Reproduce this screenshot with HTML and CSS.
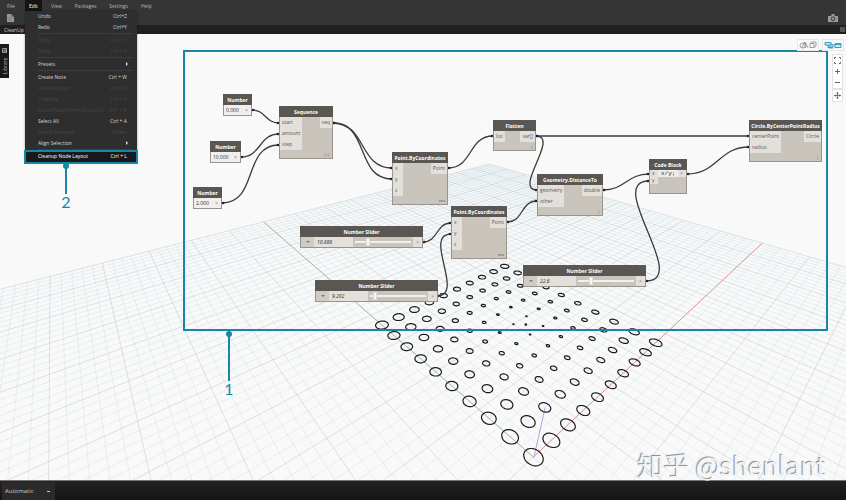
FILE: index.html
```html
<!DOCTYPE html>
<html lang="en">
<head>
    <meta charset="UTF-8">
    <meta name="viewport" content="width=device-width, initial-scale=1.0">
    <title>CleanUp</title>
    <link rel="stylesheet" href="styles.css">
</head>
<body>

    <!-- menu bar -->
    <nav class="menubar">
        <button>File</button>
        <div class="menu-holder">
            <button class="open">Edit</button>
            <div class="dropdown">
                <button><span>Undo</span><span>Ctrl+Z</span></button>
                <button><span>Redo</span><span>Ctrl+Y</span></button>
                <hr>
                <button disabled><span>Copy</span><span>Ctrl + C</span></button>
                <button disabled><span>Paste</span><span>Ctrl + V</span></button>
                <hr>
                <button class="sub"><span>Presets</span></button>
                <hr>
                <button><span>Create Note</span><span>Ctrl + W</span></button>
                <button disabled><span>Create Group</span><span>Ctrl + G</span></button>
                <button disabled><span>Ungroup</span><span>Ctrl + U</span></button>
                <button disabled><span>Create Node From Selection</span><span>Ctrl + D</span></button>
                <button><span>Select All</span><span>Ctrl + A</span></button>
                <button disabled><span>Delete Selected</span><span>Delete</span></button>
                <button class="sub"><span>Align Selection</span></button>
                <hr>
                <button class="current"><span>Cleanup Node Layout</span><span>Ctrl + L</span></button>
                <div class="callout callout-menu"><i></i><b>2</b></div>
            </div>
        </div>
        <button>View</button>
        <button>Packages</button>
        <button>Settings</button>
        <button>Help</button>
    </nav>

    <!-- toolbar -->
    <div class="toolbar">
        <button aria-label="New"><svg width="7" height="8" viewBox="0 0 7 8"><path d="M0 0h4l3 3v5H0z" fill="#999"/><path d="M4 0v3h3M1 4h4M1 6h4" fill="none" stroke="#666" stroke-width=".6"/></svg></button>
        <button aria-label="Export image"><svg width="10" height="8" viewBox="0 0 10 8"><path d="M0 2h3l1-2h2l1 2h3v6H0z" fill="#999"/><circle cx="5" cy="4.700" r="1.800" fill="#999" stroke="#333"/></svg></button>
    </div>
    <div class="tabs"><span>CleanUp</span><i></i></div>

    <!-- workspace -->
    <main class="workspace">
        <svg class="layer" id="scene"></svg>
        <svg class="layer" id="wires"></svg>

        <section class="node number n-start">
            <h2>Number</h2>
            <div class="row"><input type="text" value="0.000" aria-label="Number"><span>&gt;</span></div>
        </section>
        <section class="node number n-amount">
            <h2>Number</h2>
            <div class="row"><input type="text" value="10.000" aria-label="Number"><span>&gt;</span></div>
        </section>
        <section class="node number n-step">
            <h2>Number</h2>
            <div class="row"><input type="text" value="2.000" aria-label="Number"><span>&gt;</span></div>
        </section>

        <section class="node tall n-sequence">
            <h2>Sequence</h2>
            <div class="ports">
                <ul><li>start</li><li>amount</li><li>step</li></ul>
                <ul><li>seq</li></ul>
            </div>
            <small>|||</small>
        </section>
        <section class="node tall n-point1">
            <h2>Point.ByCoordinates</h2>
            <div class="ports">
                <ul><li>x</li><li>y</li><li>z</li></ul>
                <ul><li>Point</li></ul>
            </div>
            <small>xxx</small>
        </section>
        <section class="node tall n-point2">
            <h2>Point.ByCoordinates</h2>
            <div class="ports">
                <ul><li>x</li><li>y</li><li>z</li></ul>
                <ul><li>Point</li></ul>
            </div>
            <small>xxx</small>
        </section>
        <section class="node n-flatten">
            <h2>Flatten</h2>
            <div class="ports">
                <ul><li>list</li></ul>
                <ul><li>var[]</li></ul>
            </div>
            <small>|</small>
        </section>
        <section class="node n-distance">
            <h2>Geometry.DistanceTo</h2>
            <div class="ports">
                <ul><li>geometry</li><li>other</li></ul>
                <ul><li>double</li></ul>
            </div>
            <small>|</small>
        </section>
        <section class="node code n-code">
            <h2>Code Block</h2>
            <div class="ports">
                <ul><li>x</li><li>y</li></ul>
                <input type="text" value="x/y;" aria-label="Code">
                <ul><li>&gt;</li></ul>
            </div>
        </section>
        <section class="node n-circle">
            <h2>Circle.ByCenterPointRadius</h2>
            <div class="ports">
                <ul><li>centerPoint</li><li>radius</li></ul>
                <ul><li>Circle</li></ul>
            </div>
            <small>|</small>
        </section>

        <section class="node slider n-slider1">
            <h2>Number Slider</h2>
            <div class="row"><button aria-label="Range"></button><input type="text" value="10.886" aria-label="Value"><input type="range" value="22" aria-label="Slider"><span>&gt;</span></div>
        </section>
        <section class="node slider n-slider2">
            <h2>Number Slider</h2>
            <div class="row"><button aria-label="Range"></button><input type="text" value="9.202" aria-label="Value"><input type="range" value="6" aria-label="Slider"><span>&gt;</span></div>
        </section>
        <section class="node slider n-slider3">
            <h2>Number Slider</h2>
            <div class="row"><button aria-label="Range"></button><input type="text" value="22.6" aria-label="Value"><input type="range" value="22" aria-label="Slider"><span>&gt;</span></div>
        </section>

        <div class="frame"><div class="callout"><i></i><b>1</b></div></div>

        <button class="library"><span>Library</span><svg width="5" height="5" viewBox="0 0 5 5"><path d="M.5.5h4v4h-4zM.5 2h4M2 2v2" fill="none" stroke="#bbb" stroke-width=".8"/></svg></button>

        <div class="view-switch">
            <button aria-label="3D view"><svg width="18" height="8" viewBox="0 0 18 8" fill="none" stroke="#888" stroke-width=".8"><ellipse cx="4" cy="4.500" rx="3" ry="2.500"/><path d="M3 6l3-5 3 6M6 1v6M11 2.500h4v4h-4zM11 2.500l1.500-1.500H17v4l-2 1.500"/></svg></button>
            <button aria-label="Graph view"><svg width="18" height="8" viewBox="0 0 18 8" fill="#cdeaf5" stroke="#2a96c4" stroke-width=".9"><path d="M1 1.500h6v2.500H1zM4 4v2.500h4M5 5h4v2H5zM11 2.500h6v4h-6zM11 3.500h6M7 3l4 1.500"/></svg></button>
        </div>
        <div class="zoom">
            <button aria-label="Fit"><svg width="7" height="7" viewBox="0 0 7 7"><path d="M.5 2V.5H2M5 .5h1.500V2M6.500 5v1.500H5M2 6.500H.5V5" fill="none" stroke="#666"/></svg></button>
            <button aria-label="Zoom in"><svg width="5" height="5" viewBox="0 0 5 5"><path d="M0 2.500h5M2.500 0v5" stroke="#666"/></svg></button>
            <button aria-label="Zoom out"><svg width="5" height="5" viewBox="0 0 5 5"><path d="M0 2.500h5" stroke="#666"/></svg></button>
        </div>
        <div class="zoom pan">
            <button aria-label="Pan"><svg width="7" height="7" viewBox="0 0 7 7"><path d="M0 3.500h7M3.500 0v7M2.500 1.200h2M2.500 5.800h2M1.200 2.500v2M5.800 2.500v2" stroke="#666" stroke-width=".9"/></svg></button>
        </div>

        <div class="watermark">知乎 @shenlant</div>
    </main>

    <!-- run bar -->
    <footer class="runbar">
        <select aria-label="Run mode"><option>Automatic</option></select>
    </footer>

    <script src="script.js"></script>
</body>
</html>
```

FILE: styles.css
```css
* {
    box-sizing: border-box;
}

body {
    margin: 0;
    height: 100vh;
    display: flex;
    flex-direction: column;
    font-family: "Open Sans", "Noto Sans", sans-serif;
    font-size: 5px;
    line-height: 10px;
    background: #f9f9f9;
    overflow: hidden;
}

button, input, select {
    font: inherit;
    color: inherit;
    background: none;
    border: 0;
    margin: 0;
    padding: 0;
}

svg {
    display: block;
}

/* top bars */
.menubar {
    display: flex;
    height: 11px;
    padding-left: 2px;
    background: #353535;
    color: #b5b5b5;
}

.menubar > button {
    padding: 0 5px;
    margin-right: 3px;
}

.menubar > button:first-child {
    margin-right: 5px;
}

.menu-holder {
    position: relative;
    margin-right: 4px;
}

.open {
    width: 17px;
    height: 11px;
    background: #141414;
    color: #fff;
}

.dropdown {
    position: absolute;
    z-index: 5;
    top: 11px;
    left: 0;
    width: 112px;
    background: #2e2e2e;
    color: #d8d8d8;
    box-shadow: 0 0 2px #0006;
}

.dropdown button {
    display: flex;
    justify-content: space-between;
    width: 100%;
    height: 11px;
    padding: 0 10px 0 13px;
    line-height: 10px;
}

.dropdown button:disabled {
    color: #474747;
}

.dropdown hr {
    height: 1px;
    margin: 0 4px 1px 13px;
    border: 0;
    background: #3d3d3d;
}

.dropdown .sub::after {
    content: "";
    margin: 3px -3px 0 0;
    border: 2px solid transparent;
    border-left-color: #ddd;
    height: 0;
}

.dropdown .current {
    height: 12px;
    background: #191919;
    outline: 2px solid #1687a5;
    outline-offset: -1px;
    color: #fff;
}

.toolbar {
    display: flex;
    justify-content: space-between;
    align-items: center;
    height: 14px;
    padding: 0 8px 0 7px;
    background: #353535;
}

.tabs {
    display: flex;
    justify-content: space-between;
    align-items: center;
    height: 9px;
    padding: 0 1px 0 4px;
    background: #202020;
    color: #ccc;
}

.tabs i {
    width: 5px;
    height: 5px;
    background: #555;
}

/* callouts */
.callout {
    position: absolute;
    left: 35px;
    width: 20px;
    display: flex;
    flex-direction: column;
    align-items: center;
    color: #1687a5;
}

.callout i {
    width: 2px;
    height: 50px;
    background: #1687a5;
}

.callout i::before {
    content: "";
    display: block;
    width: 6px;
    height: 6px;
    margin-left: -2px;
    border-radius: 50%;
    background: #1687a5;
}

.callout b {
    font: 16px/16px Lato, sans-serif;
}

.callout-menu {
    top: 152px;
    left: 31px;
}

.callout-menu i {
    height: 31px;
}

/* workspace */
.workspace {
    position: relative;
    flex: 1;
}

.layer {
    position: absolute;
    width: 100%;
    height: 100%;
}

.layer path {
    fill: none;
}

.minor { stroke: #7fb6cc; stroke-opacity: .22; stroke-width: .7; }
.major { stroke: #84989f; stroke-opacity: .32; stroke-width: .8; }
.axis-x { stroke: #e2989d; }
.axis-y { stroke: #a3bf9f; }
.axis-z { stroke: #a9a9dc; }
.ring { stroke: #1c1c1c; stroke-width: 1.2; }
.wire { stroke: #3c3c3c; stroke-width: 1.3; }
.end { fill: #222; }

.frame {
    position: absolute;
    top: 16px;
    left: 183px;
    right: 18px;
    height: 281px;
    border: 2px solid #1687a5;
    pointer-events: none;
}

.frame .callout {
    top: 279px;
    left: 34px;
}

/* nodes */
.node {
    position: absolute;
    border: 1px solid #98948d;
    border-top: 0;
    background: #cac5bc;
    color: #555;
    height: 42px;
}

.node h2 {
    margin: 0 -1px;
    height: 11px;
    font-size: 5px;
    line-height: 12px;
    text-align: center;
    white-space: nowrap;
    background: #5a5753;
    color: #fff;
}

.node small {
    position: absolute;
    right: 2px;
    bottom: 1px;
    font-size: 4px;
    line-height: 5px;
}

.tall {
    height: 53px;
}

.ports {
    display: flex;
    justify-content: space-between;
    align-items: flex-start;
}

.ports ul {
    margin: 0;
    padding: 0;
    list-style: none;
    background: #e3e0db;
}

.ports li {
    height: 11px;
    padding: 0 2px;
    min-width: 10px;
    line-height: 11px;
}

.row {
    display: flex;
    height: 10px;
    background: #e3e0db;
}

.row span {
    width: 9px;
    text-align: center;
}

.number .row {
    background: #f0efed;
    color: #333;
}

.number input {
    flex: 1;
    min-width: 0;
    padding-left: 2px;
}

.number {
    width: 29px;
    height: 22px;
}

.code {
    height: 35px;
}

.code .ports li {
    height: 7px;
    min-width: 8px;
    line-height: 7px;
}

.code input {
    flex: 1;
    min-width: 0;
    height: 7px;
    padding-left: 3px;
    font: 6px/7px "Liberation Mono", monospace;
    background: #efedea;
    color: #222;
}

.slider {
    width: 123px;
    height: 22px;
}

.slider button {
    width: 13px;
    background: #d0ccc4;
}

.slider button::before {
    content: "";
    display: block;
    width: 0;
    margin: 1px auto 0;
    border: 2px solid transparent;
    border-top-color: #777;
}

.slider input[type="text"] {
    width: 39px;
    padding-left: 3px;
    font-style: italic;
    color: #222;
}

.slider input[type="range"] {
    flex: 1;
    min-width: 0;
    appearance: none;
    background: #cac5bc;
    padding: 0 2px;
}

.slider input::-webkit-slider-runnable-track {
    height: 2px;
    background: #f1f0ee;
}

.slider input::-webkit-slider-thumb {
    appearance: none;
    width: 4px;
    height: 8px;
    margin-top: -3px;
    background: #f7f7f7;
    border: 1px solid #ddd;
}

/* node positions on the canvas */
.n-start { left: 223px; top: 60px; }
.n-amount { left: 210px; top: 107px; width: 31px; }
.n-step { left: 193px; top: 153px; }
.n-sequence { left: 279px; top: 72px; width: 54px; }
.n-point1 { left: 392px; top: 118px; width: 56px; }
.n-point2 { left: 451px; top: 172px; width: 56px; }
.n-flatten { left: 493px; top: 86px; width: 43px; height: 31px; }
.n-distance { left: 537px; top: 140px; width: 66px; }
.n-code { left: 649px; top: 125px; width: 38px; }
.n-circle { left: 749px; top: 86px; width: 73px; }
.n-slider1 { left: 300px; top: 192px; }
.n-slider2 { left: 315px; top: 246px; }
.n-slider3 { left: 523px; top: 231px; }

/* side controls */
.library {
    position: absolute;
    top: 10px;
    left: 0;
    width: 9px;
    height: 34px;
    display: flex;
    align-items: center;
    justify-content: center;
    gap: 4px;
    writing-mode: vertical-rl;
    transform: rotate(180deg);
    background: #1a1a1a;
    color: #ccc;
}

.view-switch {
    position: absolute;
    top: 6px;
    right: 3px;
    display: flex;
    gap: 5px;
}

.view-switch button {
    padding: 1px;
    outline: 1px solid #e8e8e8;
}

.zoom {
    position: absolute;
    top: 20px;
    right: 3px;
    width: 11px;
    border: 1px solid #e2e2e2;
    background: #fff;
}

.zoom button {
    display: flex;
    align-items: center;
    justify-content: center;
    width: 100%;
    height: 11px;
}

.pan {
    top: 55px;
}

.watermark {
    position: absolute;
    right: 20px;
    bottom: -5px;
    font: 26px/40px "Noto Sans CJK SC", sans-serif;
    color: #f4f4f4;
    text-shadow: -1px -1px 1px #888;
}

.runbar {
    height: 20px;
    padding: 1px 0 0 2px;
    background: linear-gradient(#222, #141414);
    border-top: 1px solid #777;
}

.runbar select {
    appearance: none;
    width: 53px;
    height: 18px;
    padding-left: 3px;
    font-size: 6px;
    color: #ccc;
    background: linear-gradient(#ccc, #ccc) 45px 9px / 3px 1px no-repeat, #2b2b2b;
}
```

FILE: script.js
```js
const NS = "http://www.w3.org/2000/svg";
const scene = document.getElementById("scene");
const wires = document.getElementById("wires");

function add(parent, d, cls) {
    const p = document.createElementNS(NS, "path");
    p.setAttribute("d", d);
    p.setAttribute("class", cls);
    parent.appendChild(p);
}

function dot(parent, x, y, r) {
    const c = document.createElementNS(NS, "circle");
    c.setAttribute("cx", x);
    c.setAttribute("cy", y);
    c.setAttribute("r", r);
    c.setAttribute("class", "end");
    parent.appendChild(c);
}

// camera: world x,y on the ground plane -> screen
function depth(x, y) {
    return 1 + 0.02085 * x + 0.02548 * y;
}

function project(x, y) {
    const w = depth(x, y);
    return [
        ((20.467 * x + 1.322 * y + 533.4) / w).toFixed(1),
        ((0.794 * x + 0.95 * y + 457) / w - 34).toFixed(1)
    ];
}

// ground line, cut off before it passes behind the camera
function line(x1, y1, x2, y2) {
    const near = 0.5;
    const a = depth(x1, y1);
    const b = depth(x2, y2);
    if (b < near) return "";
    if (a < near) {
        const t = (near - a) / (b - a);
        x1 += (x2 - x1) * t;
        y1 += (y2 - y1) * t;
    }
    return "M" + project(x1, y1) + "L" + project(x2, y2);
}

const size = 50;
let minor = "";
let major = "";
for (let i = -size; i <= size; i++) {
    const d = line(i, -size, i, size) + line(-size, i, size, i);
    if (i % 5 === 0) major += d;
    else minor += d;
}
add(scene, minor, "minor");
add(scene, major, "major");
add(scene, line(0, 0, size, 0), "axis-x");
add(scene, line(0, 0, 0, size), "axis-y");
add(scene, "M534 423L545 374", "axis-z");

// circles: radius = distance to the slider point / 22.6
let rings = "";
for (let x = 0; x < 20; x += 2) {
    for (let y = 0; y < 20; y += 2) {
        const r = Math.hypot(x - 10.886, y - 9.202) / 22.6;
        const pts = [];
        for (let k = 0; k < 32; k++) {
            const t = k * Math.PI / 16;
            pts.push(project(x + r * Math.cos(t), y + r * Math.sin(t)));
        }
        rings += "M" + pts.join("L") + "Z";
    }
}
add(scene, rings, "ring");
dot(scene, ...project(10.886, 9.202), 1.3);

// wires between ports: from x,y to x,y
const links = [
    [252, 76, 279, 89],
    [241, 123, 279, 100],
    [222, 169, 279, 111],
    [333, 89, 392, 134],
    [333, 89, 392, 145],
    [448, 134, 493, 102],
    [536, 102, 749, 102],
    [536, 102, 537, 156],
    [507, 188, 537, 167],
    [423, 208, 451, 189],
    [437, 262, 451, 200],
    [603, 156, 649, 140],
    [687, 140, 749, 113],
    [646, 247, 649, 147]
];
links.forEach(([x1, y1, x2, y2]) => {
    const h = Math.hypot(x2 - x1, y2 - y1) * 0.45;
    add(wires, `M${x1} ${y1}C${x1 + h} ${y1} ${x2 - h} ${y2} ${x2} ${y2}`, "wire");
    dot(wires, x1 + 1, y1, 1.3);
    dot(wires, x2 - 1, y2, 1.3);
});
```
